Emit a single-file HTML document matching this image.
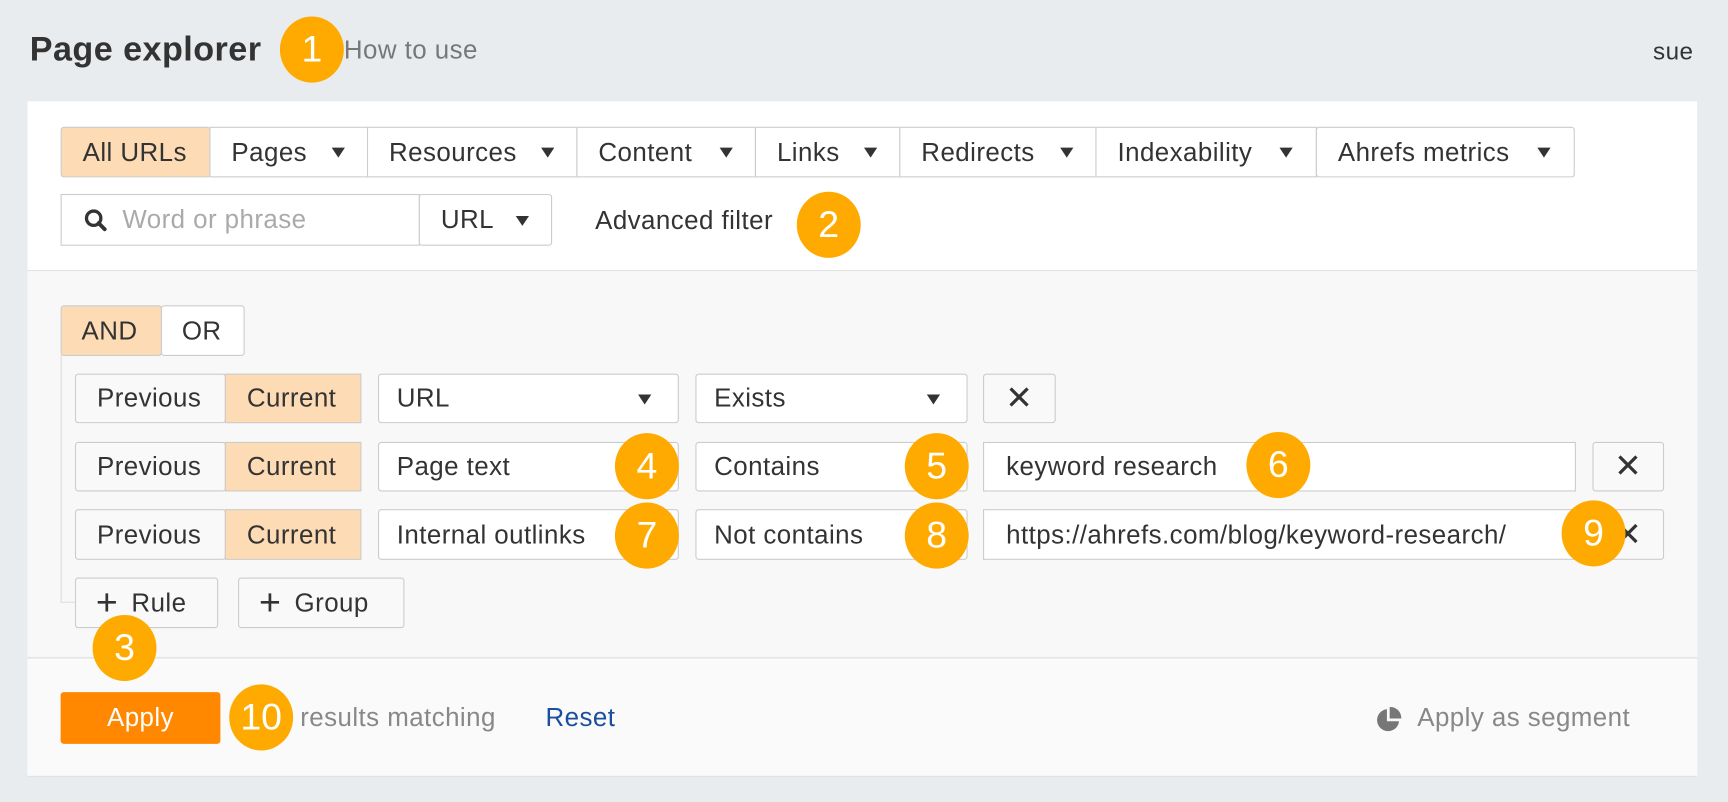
<!DOCTYPE html>
<html><head><meta charset="utf-8"><style>
html,body{margin:0;padding:0;width:1728px;height:802px;overflow:hidden;background:#e9ecef}
#w{position:absolute;left:0;top:0;width:1568px;height:728px;transform:scale(1.10204);transform-origin:0 0;font-family:"Liberation Sans",sans-serif;color:#333}
.a{position:absolute;box-sizing:border-box;white-space:nowrap;letter-spacing:.4px}
.b{position:absolute;box-sizing:border-box;border:1px solid #ccc;background:#fff;font-size:23.5px;letter-spacing:.4px;display:flex;align-items:center;padding-left:16px;white-space:nowrap}
.o{background:#fddcb5}
.tri{display:inline-block;width:0;height:0;border-left:6px solid transparent;border-right:6px solid transparent;border-top:9px solid #333;position:absolute;top:50%;margin-top:-4px}
.c{position:absolute;width:58px;height:60px;border-radius:50%;background:#ffaa00;color:#fff;font-size:34px;letter-spacing:0;display:flex;align-items:center;justify-content:center;margin:-30px 0 0 -29px}
.x{justify-content:center;padding:0;border-radius:3px}
.r{border-radius:3px}
</style></head><body><div id="w">
<div class="a" style="left:27px;top:27px;font-size:31px;font-weight:bold;color:#333">Page explorer</div>
<div class="a" style="left:312px;top:32px;font-size:23.5px;color:#777">How to use</div>
<div class="a" style="left:1500px;top:34px;font-size:22px;color:#333">sue</div>
<div class="a" style="left:25px;top:92px;width:1515px;height:613px;background:#fff;border-bottom:2px solid #dde0e3"></div>
<div class="a" style="left:25px;top:245px;width:1515px;height:353px;background:#f8f8f8;border-top:1px solid #e4e4e4;border-bottom:2px solid #e8e8e8"></div>
<div class="a" style="left:25px;top:599px;width:1515px;height:105px;background:#fafafa"></div>

<div class="b o r" style="left:55px;top:115px;width:136px;height:46px;padding-left:19px">All URLs</div>
<div class="b" style="left:190px;top:115px;width:144px;height:46px;padding-left:19px">Pages<span class="tri" style="left:110px"></span></div>
<div class="b" style="left:333px;top:115px;width:191px;height:46px;padding-left:19px">Resources<span class="tri" style="left:157px"></span></div>
<div class="b" style="left:523px;top:115px;width:163px;height:46px;padding-left:19px">Content<span class="tri" style="left:129px"></span></div>
<div class="b" style="left:685px;top:115px;width:132px;height:46px;padding-left:19px">Links<span class="tri" style="left:98px"></span></div>
<div class="b" style="left:816px;top:115px;width:179px;height:46px;padding-left:19px">Redirects<span class="tri" style="left:145px"></span></div>
<div class="b" style="left:994px;top:115px;width:201px;height:46px;padding-left:19px">Indexability<span class="tri" style="left:166px"></span></div>
<div class="b r" style="left:1194px;top:115px;width:235px;height:46px;padding-left:19px">Ahrefs metrics<span class="tri" style="left:200px"></span></div>

<div class="b" style="left:55px;top:176px;width:326px;height:47px;color:#aaa;padding-left:55px"><svg style="position:absolute;left:20px;top:12px" width="22" height="22" viewBox="0 0 22 22"><circle cx="9" cy="9" r="6.5" fill="none" stroke="#333" stroke-width="3"/><path d="M13.5 13.5L19 19" stroke="#333" stroke-width="3.5" stroke-linecap="round"/></svg>Word or phrase</div>
<div class="b r" style="left:380px;top:176px;width:121px;height:47px;padding-left:19px">URL<span class="tri" style="left:87px"></span></div>
<div class="a" style="left:540px;top:187px;font-size:23.5px">Advanced filter</div>

<div class="b o r" style="left:55px;top:277px;width:92px;height:46px;padding-left:18px">AND</div>
<div class="b r" style="left:146px;top:277px;width:76px;height:46px;padding-left:18px">OR</div>
<div class="a" style="left:55px;top:322px;width:14px;height:225px;border-left:1px solid #ddd;border-bottom:1px solid #ddd"></div>

<div class="b r" style="left:68px;top:339px;width:137px;height:45px;background:#f9f9f9;padding-left:19px">Previous</div>
<div class="b o" style="left:204px;top:339px;width:124px;height:45px;padding-left:19px">Current</div>
<div class="b r" style="left:343px;top:339px;width:273px;height:45px">URL<span class="tri" style="left:235px"></span></div>
<div class="b r" style="left:631px;top:339px;width:247px;height:45px">Exists<span class="tri" style="left:209px"></span></div>
<div class="b x" style="left:892px;top:339px;width:66px;height:45px;background:#f9f9f9;font-size:30px">✕</div>

<div class="b r" style="left:68px;top:401px;width:137px;height:45px;background:#f9f9f9;padding-left:19px">Previous</div>
<div class="b o" style="left:204px;top:401px;width:124px;height:45px;padding-left:19px">Current</div>
<div class="b r" style="left:343px;top:401px;width:273px;height:45px">Page text</div>
<div class="b r" style="left:631px;top:401px;width:247px;height:45px">Contains</div>
<div class="b" style="left:892px;top:401px;width:538px;height:45px;padding-left:20px">keyword research</div>
<div class="b x" style="left:1445px;top:401px;width:65px;height:45px;background:#f9f9f9;font-size:30px">✕</div>

<div class="b r" style="left:68px;top:462px;width:137px;height:46px;background:#f9f9f9;padding-left:19px">Previous</div>
<div class="b o" style="left:204px;top:462px;width:124px;height:46px;padding-left:19px">Current</div>
<div class="b r" style="left:343px;top:462px;width:273px;height:46px">Internal outlinks</div>
<div class="b r" style="left:631px;top:462px;width:247px;height:46px">Not contains</div>
<div class="b x" style="left:1445px;top:462px;width:65px;height:46px;background:#f9f9f9;font-size:30px">✕</div>
<div class="b" style="left:892px;top:462px;width:538px;height:46px;padding-left:20px">https://ahrefs.com/blog/keyword-research/</div>

<div class="b r" style="left:68px;top:524px;width:130px;height:46px;background:#f9f9f9;padding-left:18px"><span style="font-size:34px;font-weight:300;margin-right:12px;line-height:1">+</span>Rule</div>
<div class="b r" style="left:216px;top:524px;width:151px;height:46px;background:#f9f9f9;padding-left:18px"><span style="font-size:34px;font-weight:300;margin-right:12px;line-height:1">+</span>Group</div>

<div class="a" style="left:55px;top:628px;width:145px;height:47px;background:#ff8800;border-radius:3px;color:#fff;font-size:23.5px;display:flex;align-items:center;justify-content:center">Apply</div>
<div class="a" style="left:252px;top:638px;font-size:23.5px;color:#888">4 results matching</div>
<div class="a" style="left:495px;top:638px;font-size:23.5px;color:#1a4fa0">Reset</div>
<svg class="a" style="left:1248px;top:641px" width="24" height="24" viewBox="0 0 24 24"><path d="M10.5 2.5A10 10 0 1 0 21.5 13.5H10.5Z" fill="#777"/><path d="M13 0.5A10 10 0 0 1 23.5 11H13Z" fill="#777"/></svg>
<div class="a" style="left:1286px;top:638px;font-size:23.5px;color:#888">Apply as segment</div>

<div class="c" style="left:283px;top:45px">1</div>
<div class="c" style="left:752px;top:204px">2</div>
<div class="c" style="left:113px;top:588px">3</div>
<div class="c" style="left:587px;top:423px">4</div>
<div class="c" style="left:850px;top:423px">5</div>
<div class="c" style="left:1160px;top:422px">6</div>
<div class="c" style="left:587px;top:486px">7</div>
<div class="c" style="left:850px;top:486px">8</div>
<div class="c" style="left:1446px;top:484px">9</div>
<div class="c" style="left:237px;top:651px">10</div>
</div></body></html>
